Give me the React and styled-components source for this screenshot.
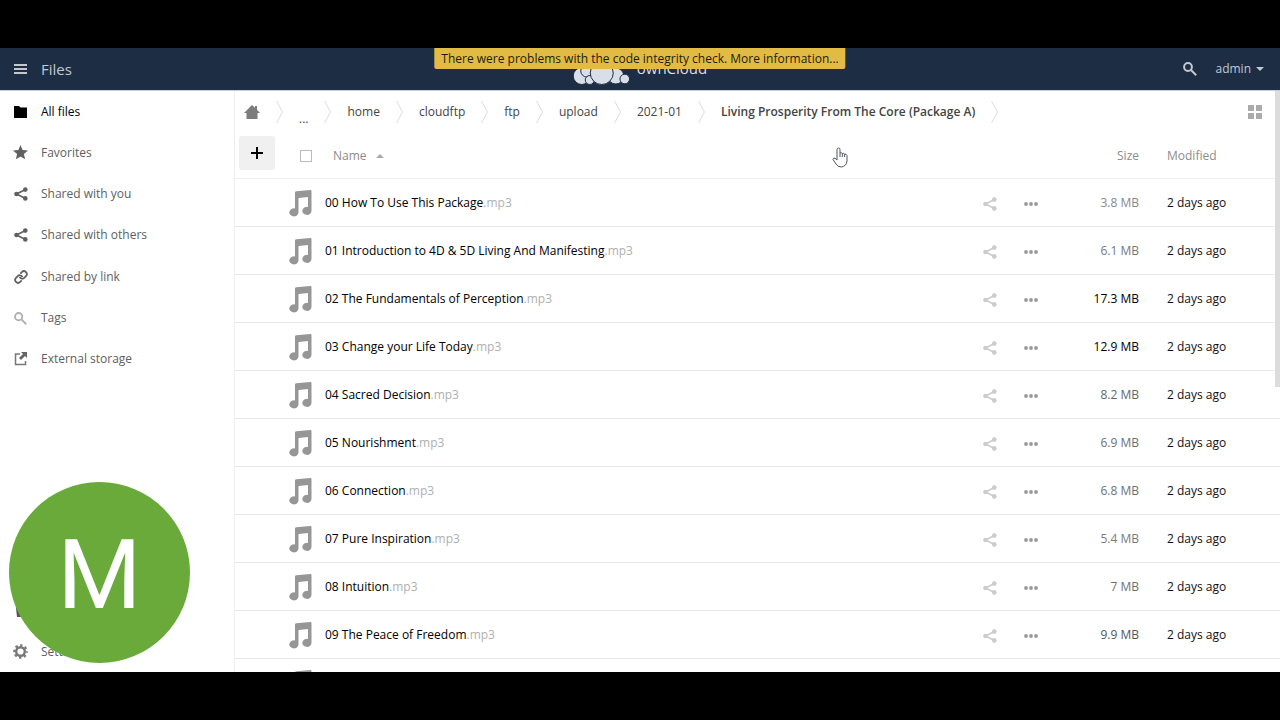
import React from 'react'
import styled, { createGlobalStyle } from 'styled-components'
import { MdStar } from 'react-icons/md'
import { Link as LinkIcon } from 'lucide-react'

const GlobalStyle = createGlobalStyle`
  * { box-sizing: border-box; }
  body {
    margin: 0;
    background: #000;
    color: #000;
    font-family: 'Open Sans', 'Noto Sans', sans-serif;
    font-size: 12px;
    line-height: 20px;
  }
  a { color: inherit; text-decoration: none; }
  button { font: inherit; color: inherit; border: 0; background: none; padding: 0; }
  svg { display: block; }
`

const Stage = styled.div`
  height: 100vh;
  padding: 48px 0;
`
const Screen = styled.div`
  position: relative;
  display: flex;
  flex-direction: column;
  height: 100%;
  overflow: hidden;
  background: #fff;
`
const Header = styled.header`
  position: relative;
  flex: none;
  display: flex;
  align-items: center;
  justify-content: space-between;
  height: 43px;
  padding: 0 16px 0 14px;
  background: #1d2d44;
  border-bottom: 1px solid #c5d0dd;
  color: #c3c8d0;
`
const MenuButton = styled.button`
  display: flex;
  align-items: center;
  gap: 14px;
  font-size: 15px;
`
const UserArea = styled.div`
  display: flex;
  align-items: center;
  gap: 18px;
`
const UserButton = styled.button`
  display: flex;
  align-items: center;
  gap: 5px;
`
const Caret = styled.span`
  border: 4px solid transparent;
  border-top-color: currentColor;
  border-bottom: 0;
`
const Brand = styled.a`
  position: absolute;
  left: 50%;
  top: 10px;
  display: flex;
  gap: 6px;
  transform: translateX(-50%);
  color: #d9dfe9;
  font-size: 15px;
`
const Notice = styled.a`
  position: absolute;
  z-index: 2;
  top: 0;
  left: 50%;
  transform: translateX(-50%);
  padding: 1px 7px 0;
  background: #e2bb44;
  border-radius: 0 0 2px 2px;
  color: #221c0a;
  white-space: nowrap;
`

const Body = styled.div`
  flex: 1;
  min-height: 0;
  display: grid;
  grid-template-columns: 235px 1fr;
`
const Sidebar = styled.aside`
  display: flex;
  flex-direction: column;
  justify-content: space-between;
  border-right: 1px solid #eee;
`
const NavList = styled.nav`
  display: grid;
  grid-auto-rows: 1fr;
  height: ${({ $height }) => $height}px;
`
const NavLink = styled.a`
  display: flex;
  align-items: center;
  gap: 13px;
  padding-left: 13px;
  color: ${({ $active }) => ($active ? '#000' : '#606060')};
`
const NavIcon = styled.span`
  display: flex;
  justify-content: center;
  width: 15px;
  color: ${({ $color }) => $color || 'inherit'};
`

const Content = styled.main`
  min-width: 0;
  overflow: hidden;
`
const Controls = styled.div`
  display: flex;
  align-items: center;
  justify-content: space-between;
  height: 40px;
  padding: 2px 18px 0 9px;
  color: #444;
`
const Crumbs = styled.nav`
  display: flex;
  align-items: center;
`
const Crumb = styled.a`
  padding: ${({ $home }) => ($home ? '0 16px 0 0' : '0 16px')};
  padding-top: ${({ $low }) => ($low ? 14 : 0)}px;
  font-weight: ${({ $current }) => ($current ? 600 : 400)};
  white-space: nowrap;
`
const ViewButton = styled.button`
  color: #aaa;
`

const FileTable = styled.table`
  width: 100%;
  table-layout: fixed;
  border-collapse: collapse;
`
const HeadCell = styled.th`
  width: ${({ $width }) => ($width ? `${$width}px` : 'auto')};
  height: 47px;
  padding: 4px ${({ $right }) => $right || 0}px 0 ${({ $left }) => $left || 0}px;
  border-bottom: 1px solid #eee;
  color: #8c8c8c;
  font-weight: 400;
  text-align: ${({ $align }) => $align || 'left'};
`
const Cell = styled.td`
  height: 48px;
  padding: 2px ${({ $right }) => $right || 0}px 0 0;
  border-bottom: 1px solid #eaeaea;
  color: ${({ $color }) => $color || 'inherit'};
  text-align: ${({ $align }) => $align || 'left'};
  white-space: nowrap;
`
const AddButton = styled.button`
  display: flex;
  align-items: center;
  justify-content: center;
  width: 36px;
  height: 34px;
  margin: 0 0 6px 4px;
  border-radius: 3px;
  background: #f0f0f0;
  color: #000;
`
const Check = styled.input`
  appearance: none;
  display: block;
  width: 12px;
  height: 12px;
  margin: 0 0 0 11px;
  border: 1px solid #bbb;
`
const SortButton = styled.button`
  display: flex;
  align-items: center;
  gap: 9px;
`
const SortMark = styled.span`
  border: 4px solid transparent;
  border-bottom-color: #aaa;
  border-top: 0;
`
const Ext = styled.span`
  color: #b0b0b0;
`
const Actions = styled.div`
  display: flex;
  align-items: center;
  gap: 27px;
  padding: 2px 0 0 8px;
  color: #ccc;
`
const MoreButton = styled.button`
  color: #999;
`

const ScrollThumb = styled.div`
  position: absolute;
  top: 43px;
  right: 0;
  width: 5px;
  height: 296px;
  background: #dcdcdc;
`
const Avatar = styled.div`
  position: absolute;
  left: 9px;
  bottom: 9px;
  display: flex;
  align-items: center;
  justify-content: center;
  width: 181px;
  height: 181px;
  padding-top: 4px;
  border-radius: 50%;
  background: #6aaa3b;
  color: #fff;
  font-family: Roboto, sans-serif;
  font-size: 96px;
  line-height: 96px;
`
const Pointer = styled.svg`
  position: absolute;
  left: 832px;
  top: 99px;
`

const MenuIcon = () => (
  <svg width="13" height="11" viewBox="0 0 13 11" fill="currentColor">
    <path d="M0 0h13v2H0zM0 4h13v2H0zM0 8h13v2H0z" />
  </svg>
)

const CloudLogo = () => (
  <svg width="58" height="28" viewBox="0 0 58 28" fill="#d9dfe9" stroke="#1d2d44">
    <circle cx="29" cy="8" r="8" />
    <circle cx="9" cy="18" r="8.5" />
    <circle cx="14" cy="13" r="6" />
    <circle cx="17" cy="22" r="4.5" />
    <circle cx="43" cy="18" r="8" />
    <circle cx="52" cy="21" r="4.8" />
    <circle cx="29" cy="15" r="11.5" />
  </svg>
)

const SearchIcon = ({ size = 14 }) => (
  <svg width={size} height={size} viewBox="0 0 14 14" fill="none" stroke="currentColor" strokeWidth="2">
    <circle cx="5" cy="5" r="3.900" />
    <path d="M8 8l5.200 5.200" />
  </svg>
)

const FolderIcon = () => (
  <svg width="13" height="12" viewBox="0 0 13 12" fill="currentColor">
    <path d="M0 0h5l1.500 1.500H13V12H0z" />
  </svg>
)

const ShareIcon = () => (
  <svg width="14" height="14" viewBox="0 0 14 14" fill="currentColor">
    <path d="M11.500 2.500L2.500 7l9 4.500" fill="none" stroke="currentColor" strokeWidth="1.700" />
    <circle cx="11.300" cy="2.600" r="2.300" />
    <circle cx="2.500" cy="7" r="2.300" />
    <circle cx="11.300" cy="11.400" r="2.300" />
  </svg>
)

const HomeIcon = () => (
  <svg width="16" height="14" viewBox="0 0 16 14" fill="#7d7d7d">
    <path d="M8 0l3 2.800V1h2v3.700L16 8h-2.500v6h-11V8H0z" />
  </svg>
)

const Chevron = () => (
  <svg width="7" height="24" viewBox="0 0 7 24" fill="none" stroke="#ddd">
    <path d="M.5 1l6 11-6 11" />
  </svg>
)

const GridIcon = () => (
  <svg width="14" height="14" viewBox="0 0 14 14" fill="currentColor">
    <path d="M0 0h6v6H0zM8 0h6v6H8zM0 8h6v6H0zM8 8h6v6H8z" />
  </svg>
)

const PlusIcon = () => (
  <svg width="12" height="12" viewBox="0 0 12 12" stroke="currentColor" strokeWidth="2">
    <path d="M6 0v12M0 6h12" />
  </svg>
)

const MusicIcon = () => (
  <svg width="24" height="28" viewBox="0 0 24 28" fill="#969696">
    <path d="M6 3.500Q6 2.500 7 2.300L21.500 1q1 0 1 1v20a4.600 4 0 1 1-3.500-4V8L9.500 9v14.500a4.600 4 0 1 1-3.500-4z" />
  </svg>
)

const DotsIcon = () => (
  <svg width="14" height="4" viewBox="0 0 14 4" fill="currentColor">
    <circle cx="2" cy="2" r="1.900" />
    <circle cx="7" cy="2" r="1.900" />
    <circle cx="12" cy="2" r="1.900" />
  </svg>
)

const ExternalIcon = () => (
  <svg width="14" height="14" viewBox="0 0 14 14">
    <path d="M6 2H1.500v10.500h10V9" fill="none" stroke="#777" strokeWidth="1.500" />
    <path d="M7 0h6v6l-2-2-4 4-2-2 4-4z" fill="#666" />
  </svg>
)

const GearIcon = () => (
  <svg width="15" height="15" viewBox="0 0 15 15" fill="none" stroke="#777">
    <circle cx="7.500" cy="7.500" r="4.300" strokeWidth="2.400" />
    <circle cx="7.500" cy="7.500" r="6.300" strokeWidth="2" strokeDasharray="2.470 2.478" strokeDashoffset="1.200" />
  </svg>
)

const TrashIcon = () => (
  <svg width="14" height="14" viewBox="0 0 14 14" fill="#555">
    <path d="M2 1h4l1-1h2l1 1h3v2H2zM2 4h10l-1 9H3z" />
  </svg>
)

const views = [
  { label: 'All files', icon: <FolderIcon />, active: true },
  { label: 'Favorites', icon: <MdStar size={15} viewBox="2 2 20 20" /> },
  { label: 'Shared with you', icon: <ShareIcon /> },
  { label: 'Shared with others', icon: <ShareIcon /> },
  { label: 'Shared by link', icon: <LinkIcon size={14} strokeWidth={3} /> },
  { label: 'Tags', icon: <SearchIcon size={13} />, color: '#b0b0b0' },
  { label: 'External storage', icon: <ExternalIcon /> },
]

const bottomViews = [
  { label: 'Deleted files', icon: <TrashIcon /> },
  { label: 'Settings', icon: <GearIcon /> },
]

const folders = ['home', 'cloudftp', 'ftp', 'upload', '2021-01']

const files = [
  { name: '00 How To Use This Package', size: '3.8 MB', color: '#888' },
  { name: '01 Introduction to 4D & 5D Living And Manifesting', size: '6.1 MB', color: '#777' },
  { name: '02 The Fundamentals of Perception', size: '17.3 MB', color: '#000' },
  { name: '03 Change your Life Today', size: '12.9 MB', color: '#000' },
  { name: '04 Sacred Decision', size: '8.2 MB', color: '#666' },
  { name: '05 Nourishment', size: '6.9 MB', color: '#707070' },
  { name: '06 Connection', size: '6.8 MB', color: '#707070' },
  { name: '07 Pure Inspiration', size: '5.4 MB', color: '#7a7a7a' },
  { name: '08 Intuition', size: '7 MB', color: '#707070' },
  { name: '09 The Peace of Freedom', size: '9.9 MB', color: '#555' },
  { name: '10 Abundance', size: '8.1 MB', color: '#666' },
]

const Nav = ({ items, height, label }) => (
  <NavList $height={height} aria-label={label}>
    {items.map(item => (
      <NavLink key={item.label} href="#" $active={item.active}>
        <NavIcon $color={item.color}>{item.icon}</NavIcon>
        {item.label}
      </NavLink>
    ))}
  </NavList>
)

const Breadcrumbs = () => (
  <Crumbs aria-label="Path">
    <Crumb href="#" $home aria-label="Home"><HomeIcon /></Crumb>
    <Chevron />
    <Crumb href="#" $low>...</Crumb>
    <Chevron />
    {folders.map(folder => (
      <React.Fragment key={folder}>
        <Crumb href="#">{folder}</Crumb>
        <Chevron />
      </React.Fragment>
    ))}
    <Crumb href="#" $current>Living Prosperity From The Core (Package A)</Crumb>
    <Chevron />
  </Crumbs>
)

const FileRow = ({ file }) => (
  <tr>
    <Cell />
    <Cell><MusicIcon /></Cell>
    <Cell><a href="#">{file.name}<Ext>.mp3</Ext></a></Cell>
    <Cell>
      <Actions>
        <button aria-label="Share"><ShareIcon /></button>
        <MoreButton aria-label="More"><DotsIcon /></MoreButton>
      </Actions>
    </Cell>
    <Cell $align="right" $right={28} $color={file.color}>{file.size}</Cell>
    <Cell $color="#111">2 days ago</Cell>
  </tr>
)

const App = () => (
  <Stage>
    <GlobalStyle />
    <Screen>
      <Header>
        <MenuButton><MenuIcon />Files</MenuButton>
        <Brand href="#"><CloudLogo />ownCloud</Brand>
        <UserArea>
          <button aria-label="Search"><SearchIcon /></button>
          <UserButton>admin<Caret /></UserButton>
        </UserArea>
        <Notice href="#">There were problems with the code integrity check. More information...</Notice>
      </Header>
      <Body>
        <Sidebar>
          <Nav items={views} height={289} label="Views" />
          <Nav items={bottomViews} height={82} label="More views" />
        </Sidebar>
        <Content>
          <Controls>
            <Breadcrumbs />
            <ViewButton aria-label="Grid view"><GridIcon /></ViewButton>
          </Controls>
          <FileTable>
            <thead>
              <tr>
                <HeadCell $width={54}><AddButton aria-label="New"><PlusIcon /></AddButton></HeadCell>
                <HeadCell $width={36}><Check type="checkbox" aria-label="Select all" /></HeadCell>
                <HeadCell $left={8}><SortButton>Name<SortMark /></SortButton></HeadCell>
                <HeadCell $width={85} />
                <HeadCell $width={107} $align="right" $right={28}>Size</HeadCell>
                <HeadCell $width={113}>Modified</HeadCell>
              </tr>
            </thead>
            <tbody>
              {files.map(file => <FileRow key={file.name} file={file} />)}
            </tbody>
          </FileTable>
        </Content>
      </Body>
      <ScrollThumb />
      <Avatar>M</Avatar>
      <Pointer width="16" height="22" viewBox="0 0 16 22" fill="#fff" stroke="#555566">
        <path d="M5 13V2.500a1.500 1.500 0 0 1 3 0V6q1.500-.8 2.300.5 1.500-.6 2.200.6 2-.3 2.500 1.400v5.500q-.4 5-5.500 6-4 0-5.500-3L1 12.500q0-2 2-1.200z" />
        <path d="M8 6v4M10.300 6.500V10M12.600 7v3" fill="none" />
      </Pointer>
    </Screen>
  </Stage>
)

export default App
